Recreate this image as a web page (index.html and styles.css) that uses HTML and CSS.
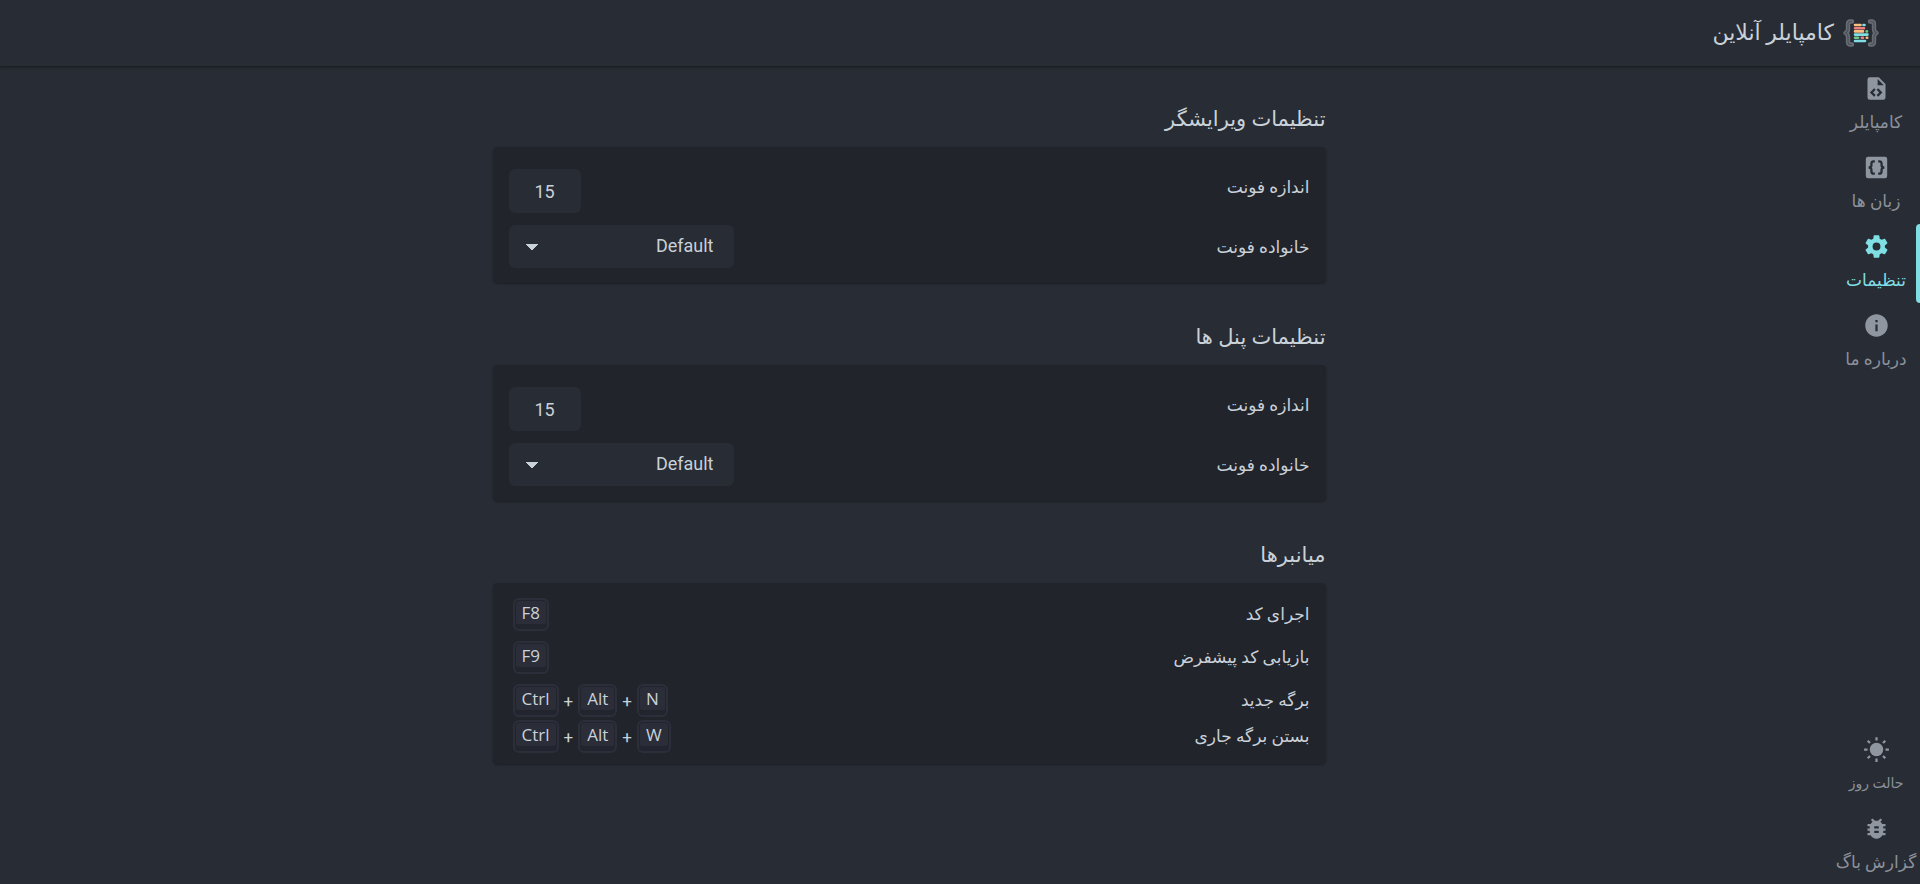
FILE: index.html
```html
<!DOCTYPE html>
<html lang="fa" dir="rtl">
<head>
<meta charset="utf-8">
<title>کامپایلر آنلاین</title>
<link rel="stylesheet" href="styles.css">
</head>
<body>
<header class="topbar">
  <svg class="logo" viewBox="0 0 36 28" aria-hidden="true">
    <g fill="none" stroke="#676c75" stroke-width="4.400" stroke-linejoin="round" stroke-linecap="round">
      <path d="M9 2.500H7.500Q5 2.500 5 5V10Q5 13 2.500 14Q5 15 5 18V23Q5 25.500 7.500 25.500H9"/>
      <path d="M27 2.500H28.500Q31 2.500 31 5V10Q31 13 33.500 14Q31 15 31 18V23Q31 25.500 28.500 25.500H27"/>
    </g>
    <g fill="none" stroke="#4c515a" stroke-width="1.200">
      <path d="M9 2.500H7.500Q5 2.500 5 5V10Q5 13 2.500 14Q5 15 5 18V23Q5 25.500 7.500 25.500H9"/>
      <path d="M27 2.500H28.500Q31 2.500 31 5V10Q31 13 33.500 14Q31 15 31 18V23Q31 25.500 28.500 25.500H27"/>
    </g>
    <g stroke-width="2.600" stroke-linecap="round">
      <path stroke="#fbc07f" d="M12 6H17.500M12 12.400H20M23.800 18.800H24.200"/>
      <path stroke="#7fdfe4" d="M20.500 6H21.500M12 15.600H24.500M12 22H22"/>
      <path stroke="#ee8080" d="M12 9.200H21M18.800 18.800H20"/>
      <path stroke="#6fc58a" d="M23.600 12.400H24M12 18.800H15.200"/>
    </g>
  </svg>
  <h1 class="brand">کامپایلر آنلاین</h1>
</header>
<div class="shell">
  <nav class="sidebar">
    <a class="item" href="#compiler">
      <svg class="icon" viewBox="0 0 24 24" aria-hidden="true"><path fill-rule="evenodd" d="M13 9h5.500L13 3.500V9M6 2h8l6 6v12a2 2 0 0 1-2 2H6a2 2 0 0 1-2-2V4a2 2 0 0 1 2-2m.120 13.500l3.740 3.740 1.420-1.410-2.330-2.330 2.330-2.330-1.420-1.410-3.740 3.740m11.160 0l-3.740-3.740-1.420 1.410 2.330 2.330-2.330 2.330 1.420 1.410 3.740-3.740z"/></svg>
      <span>کامپایلر</span>
    </a>
    <a class="item" href="#languages">
      <svg class="icon" viewBox="0 0 24 24" aria-hidden="true"><rect x="2.500" y="2.500" width="19" height="19" rx="2"/><path fill="none" stroke="#282c34" stroke-width="2" d="M10.500 6.500H9.500Q7.500 6.500 7.500 8.500V10Q7.500 12 5 12Q7.500 12 7.500 14V15.500Q7.500 17.500 9.500 17.500H10.500M13.500 6.500H14.500Q16.500 6.500 16.500 8.500V10Q16.500 12 19 12Q16.500 12 16.500 14V15.500Q16.500 17.500 14.500 17.500H13.500"/></svg>
      <span>زبان ها</span>
    </a>
    <a class="item active" href="#settings" aria-current="page">
      <svg class="icon" viewBox="0 0 24 24" aria-hidden="true"><path d="M12 15.500A3.500 3.500 0 0 1 8.500 12 3.500 3.500 0 0 1 12 8.500a3.500 3.500 0 0 1 3.500 3.500 3.500 3.500 0 0 1-3.500 3.500m7.430-2.530c.04-.32.070-.640.070-.970s-.03-.660-.070-1l2.110-1.630c.190-.150.240-.420.120-.640l-2-3.460c-.120-.220-.390-.310-.610-.220l-2.490 1c-.520-.390-1.060-.730-1.690-.980l-.370-2.650A.506.506 0 0 0 14 2h-4c-.250 0-.460.180-.5.420l-.370 2.650c-.630.250-1.170.590-1.690.980l-2.490-1c-.220-.090-.490 0-.610.220l-2 3.460c-.130.220-.070.490.120.640L4.570 11c-.04.340-.07.670-.07 1s.03.650.07.970l-2.110 1.660c-.190.150-.250.420-.120.640l2 3.460c.120.220.390.300.610.220l2.490-1.010c.520.400 1.060.740 1.690.990l.370 2.650c.04.240.250.420.5.420h4c.250 0 .460-.180.5-.420l.370-2.650c.630-.260 1.170-.590 1.690-.990l2.490 1.010c.220.080.490 0 .610-.220l2-3.460c.120-.220.070-.490-.120-.640z"/></svg>
      <span>تنظیمات</span>
    </a>
    <a class="item" href="#about">
      <svg class="icon" viewBox="0 0 24 24" aria-hidden="true"><path d="M12 2C6.480 2 2 6.480 2 12s4.480 10 10 10 10-4.480 10-10S17.520 2 12 2zm1 15h-2v-6h2v6zm0-8h-2V7h2v2z"/></svg>
      <span>درباره ما</span>
    </a>
    <button class="item bottom small" type="button">
      <svg class="icon" viewBox="0 0 24 24" aria-hidden="true"><circle cx="12" cy="12" r="6"/><path fill="none" stroke="#8f969f" stroke-width="2" d="M12 1V4M12 20V23M1 12H4M20 12H23M4.200 4.200L6.200 6.200M17.800 17.800L19.800 19.800M4.200 19.800L6.200 17.800M17.800 6.200L19.800 4.200"/></svg>
      <span>حالت روز</span>
    </button>
    <a class="item" href="#report">
      <svg class="icon" viewBox="0 0 24 24" aria-hidden="true"><path d="M20 8h-2.810c-.450-.780-1.070-1.450-1.820-1.960L17 4.410 15.590 3l-2.170 2.170C12.960 5.060 12.490 5 12 5s-.960.060-1.410.170L8.410 3 7 4.410l1.620 1.630C7.880 6.550 7.260 7.220 6.810 8H4v2h2.090c-.05.330-.09.660-.09 1v1H4v2h2v1c0 .340.040.670.090 1H4v2h2.810c1.040 1.790 2.970 3 5.190 3s4.150-1.210 5.190-3H20v-2h-2.090c.05-.330.090-.660.090-1v-1h2v-2h-2v-1c0-.340-.040-.670-.090-1H20V8zm-6 8h-4v-2h4v2zm0-4h-4v-2h4v2z"/></svg>
      <span>گزارش باگ</span>
    </a>
  </nav>
  <main class="main">
    <section class="section">
      <h2 class="heading">تنظیمات ویرایشگر</h2>
      <div class="card">
        <div class="row first">
          <label for="editor-size">اندازه فونت</label>
          <input class="size" id="editor-size" type="text" inputmode="numeric" value="15">
        </div>
        <div class="row">
          <label for="editor-family">خانواده فونت</label>
          <select class="family" id="editor-family"><option>Default</option></select>
        </div>
      </div>
    </section>
    <section class="section">
      <h2 class="heading">تنظیمات پنل ها</h2>
      <div class="card">
        <div class="row first">
          <label for="panel-size">اندازه فونت</label>
          <input class="size" id="panel-size" type="text" inputmode="numeric" value="15">
        </div>
        <div class="row">
          <label for="panel-family">خانواده فونت</label>
          <select class="family" id="panel-family"><option>Default</option></select>
        </div>
      </div>
    </section>
    <section class="section">
      <h2 class="heading">میانبرها</h2>
      <dl class="card keys">
        <div class="row single"><dt>اجرای کد</dt><dd class="combo"><kbd>F8</kbd></dd></div>
        <div class="row single"><dt>بازیابی کد پیشفرض</dt><dd class="combo"><kbd>F9</kbd></dd></div>
        <div class="row"><dt>برگه جدید</dt><dd class="combo"><kbd>Ctrl</kbd>+<kbd>Alt</kbd>+<kbd>N</kbd></dd></div>
        <div class="row"><dt>بستن برگه جاری</dt><dd class="combo"><kbd>Ctrl</kbd>+<kbd>Alt</kbd>+<kbd>W</kbd></dd></div>
      </dl>
    </section>
  </main>
</div>
</body>
</html>
```
FILE: styles.css
```css
* { box-sizing: border-box; }

body {
  margin: 0;
  min-height: 100vh;
  display: flex;
  flex-direction: column;
  background: #282c34;
  color: #c9d1d9;
  font: 17px/24px Roboto, "DejaVu Sans", sans-serif;
}

.topbar {
  display: flex;
  align-items: center;
  gap: 9px;
  height: 66px;
  padding-inline: 41px;
  box-shadow: 0 1px 3px #15181d;
}

.logo { width: 36px; height: 28px; }

.brand { margin: 0; font-size: 22px; font-weight: 400; }

.shell { flex: 1; display: flex; }

.sidebar {
  width: 88px;
  display: flex;
  flex-direction: column;
}

.item {
  display: flex;
  flex-direction: column;
  align-items: center;
  gap: 8px;
  height: 79px;
  padding: 9px 0 0;
  border: 0;
  background: none;
  color: #8b919b;
  font: inherit;
  text-decoration: none;
  white-space: nowrap;
  position: relative;
}

.item.active { color: #80dfe4; }

.item.active::before {
  content: "";
  position: absolute;
  inset-block: 0;
  inset-inline-start: 0;
  width: 4px;
  border-radius: 4px 0 0 4px;
  background: #80dfe4;
}

.bottom { margin-top: auto; }
.bottom, .bottom + .item { padding-top: 10px; }
.item.small { font-size: 14px; }

.icon { width: 27px; height: 27px; fill: #8f969f; }
.active .icon { fill: currentColor; }

.main {
  flex: 1;
  padding: 37px 14px 24px 0;
}

.section {
  max-width: 833px;
  margin: 0 auto 38px;
}

.heading {
  margin: 0 0 11px;
  font-size: 21px;
  line-height: 33px;
  font-weight: 400;
}

.card {
  margin: 0;
  padding: 22px 16px 15px;
  border-radius: 5px;
  background: #21242b;
  box-shadow: 0 1px 2px #1c1f25;
}

.row {
  display: flex;
  justify-content: space-between;
  align-items: center;
}

.first { align-items: flex-start; margin-bottom: 12px; }
.first label { padding-top: 6px; }

.size, .family {
  height: 44px;
  border: 0;
  border-radius: 6px;
  background-color: #282c34;
  color: inherit;
  font: inherit;
  font-size: 18px;
}

.size { width: 72px; text-align: center; }

.family {
  appearance: none;
  width: 225px;
  height: 43px;
  padding: 0 20px 2px;
  background-image: linear-gradient(to top right, transparent 50%, #c9d1d9 50%), linear-gradient(to top left, transparent 50%, #c9d1d9 50%);
  background-size: 6px 6px;
  background-position: 17px 19px, 23px 19px;
  background-repeat: no-repeat;
}

.keys { padding: 15px 16px 8px; }
.keys .row { height: 36px; align-items: flex-start; }
.keys .single { height: 43px; }
.keys dt { line-height: 33px; }

.combo {
  margin: 0;
  padding-left: 4px;
  direction: ltr;
  display: flex;
  align-items: center;
  gap: 5px;
}

kbd {
  padding: 0 7px 4px;
  border: 2px solid #2c2e39;
  border-radius: 6px;
  background: #2b2d38;
  box-shadow: inset 0 0 0 1px #22252d, inset 0 -5px 0 #22252d;
  font: 17px/25px "Open Sans", sans-serif;
}
```
